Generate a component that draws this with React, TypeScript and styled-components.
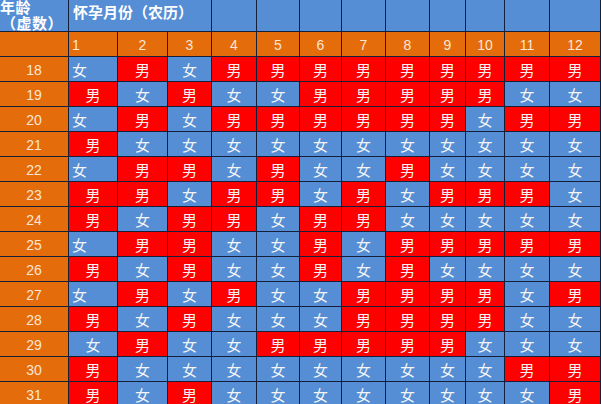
import { createGlobalStyle, styled } from "styled-components";

const GlobalStyle = createGlobalStyle`
  html, body {
    margin: 0;
    padding: 0;
    background: #ffffff;
    overflow: hidden;
  }
  body {
    font-family: "Liberation Sans", "Noto Sans CJK SC", sans-serif;
  }
`;

type Gender = "男" | "女";

type Row = {
  age: number;
  cells: Gender[];
  leftFirst?: boolean;
};

const M: Gender = "男";
const F: Gender = "女";

const rows: Row[] = [
  { age: 18, cells: [F, M, F, M, M, M, M, M, M, M, M, M], leftFirst: true },
  { age: 19, cells: [M, F, M, F, F, M, M, M, M, M, F, F] },
  { age: 20, cells: [F, M, F, M, M, M, M, M, M, F, M, M], leftFirst: true },
  { age: 21, cells: [M, F, F, F, F, F, F, F, F, F, F, F] },
  { age: 22, cells: [F, M, M, F, M, F, F, M, F, F, F, F], leftFirst: true },
  { age: 23, cells: [M, M, F, M, M, F, M, F, M, M, M, F] },
  { age: 24, cells: [M, F, M, M, F, M, M, F, F, F, F, F] },
  { age: 25, cells: [F, M, M, F, F, M, F, M, M, M, M, M], leftFirst: true },
  { age: 26, cells: [M, F, M, F, F, M, F, M, F, F, F, F] },
  { age: 27, cells: [F, M, F, M, F, F, M, M, M, M, F, M], leftFirst: true },
  { age: 28, cells: [M, F, M, F, F, F, M, M, M, M, F, F] },
  { age: 29, cells: [F, M, F, F, M, M, M, M, M, F, F, F] },
  { age: 30, cells: [M, F, F, F, F, F, F, F, F, F, M, M] },
  { age: 31, cells: [M, F, M, F, F, F, F, F, F, F, F, M] },
];

const months = Array.from({ length: 12 }, (_, i) => i + 1);

const Sheet = styled.div`
  display: grid;
  grid-template-columns: 69px 49px 50px 44px 45px 43px 42px 44px 44px 36px 39px 45px 51px;
  grid-template-rows: 32px repeat(15, 25px);
  width: 601px;
  height: 404px;
  overflow: hidden;
`;

const Cell = styled.div<{ $bg: string; $align?: "left" | "center" }>`
  box-sizing: border-box;
  background: ${(p) => p.$bg};
  border-right: 1px solid #14203a;
  border-bottom: 1px solid #14203a;
  display: flex;
  align-items: center;
  justify-content: ${(p) => (p.$align === "left" ? "flex-start" : "center")};
  padding-left: ${(p) => (p.$align === "left" ? "3px" : "0")};
  overflow: hidden;
`;

const AgeHead = styled(Cell)`
  flex-direction: column;
  align-items: flex-start;
  justify-content: flex-end;
  padding: 0;
  color: #ffffff;
  font-family: "Noto Sans CJK SC", sans-serif;
  font-weight: 700;
  font-size: 15px;
  line-height: 16px;
`;

const AgeHeadLine = styled.span<{ $indent?: number }>`
  margin-left: ${(p) => p.$indent ?? 0}px;
  white-space: nowrap;
  letter-spacing: 0.5px;
`;

const MonthHead = styled(Cell)`
  grid-column: span 3;
  align-items: flex-start;
  justify-content: flex-start;
  padding: 3px 0 0 4px;
  color: #ffffff;
  font-family: "Noto Sans CJK SC", sans-serif;
  font-weight: 700;
  font-size: 15px;
  line-height: 18px;
  white-space: nowrap;
`;

const NumberCell = styled(Cell)`
  align-items: flex-end;
  padding-bottom: 3px;
  color: #fce6d4;
  font-size: 14px;
  line-height: 16px;
`;

const AgeCell = styled(Cell)`
  color: #fce6d4;
  font-size: 14px;
  padding-top: 2px;
`;

const GenderCell = styled(Cell)`
  color: #f4f4f4;
  font-family: "Noto Sans CJK SC", sans-serif;
  font-size: 15px;
  line-height: 18px;
  padding-top: 1px;
`;

const BLUE = "#558ed5";
const RED = "#ff0000";
const ORANGE = "#e46c0a";

export default function App() {
  return (
    <>
      <GlobalStyle />
      <Sheet>
        <AgeHead $bg={BLUE}>
          <AgeHeadLine>年龄</AgeHeadLine>
          <AgeHeadLine $indent={1}>（虚数）</AgeHeadLine>
        </AgeHead>
        <MonthHead $bg={BLUE}>怀孕月份（农历）</MonthHead>
        {months.slice(3).map((m) => (
          <Cell key={`h${m}`} $bg={BLUE} />
        ))}

        <Cell $bg={ORANGE} />
        {months.map((m) => (
          <NumberCell key={`n${m}`} $bg={ORANGE} $align={m === 1 ? "left" : "center"}>
            {m}
          </NumberCell>
        ))}

        {rows.map((row) => (
          <Row key={row.age} row={row} />
        ))}
      </Sheet>
    </>
  );
}

function Row({ row }: { row: Row }) {
  return (
    <>
      <AgeCell $bg={ORANGE}>{row.age}</AgeCell>
      {row.cells.map((g, i) => (
        <GenderCell
          key={i}
          $bg={g === M ? RED : BLUE}
          $align={i === 0 && row.leftFirst ? "left" : "center"}
        >
          {g}
        </GenderCell>
      ))}
    </>
  );
}
